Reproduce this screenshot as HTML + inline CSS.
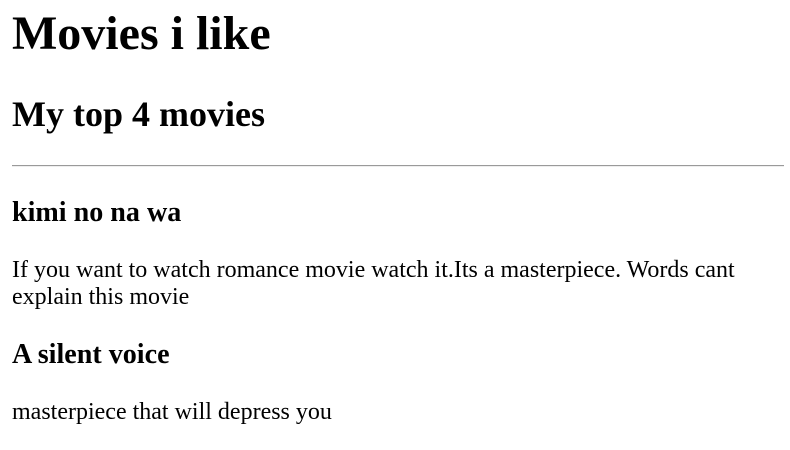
<!DOCTYPE html>
<html><head><style>
body{margin:6px 12px 12px 12px;font-family:"Liberation Serif",serif;font-size:24px;color:#000;background:#fff}
h1{margin-top:0}
hr{margin:12px -6px 12px 0;border:0;border-top:1px solid #9a9a9a;border-bottom:1px solid #eee}
hr + h3{margin-top:30px}
</style></head><body>
<h1>Movies i like</h1>
<h2>My top 4 movies</h2>
<hr>
<h3>kimi no na wa</h3>
<p>If you want to watch romance movie watch it.Its a masterpiece. Words cant explain this movie</p>
<h3>A silent voice</h3>
<p>masterpiece that will depress you</p>
</body></html>
